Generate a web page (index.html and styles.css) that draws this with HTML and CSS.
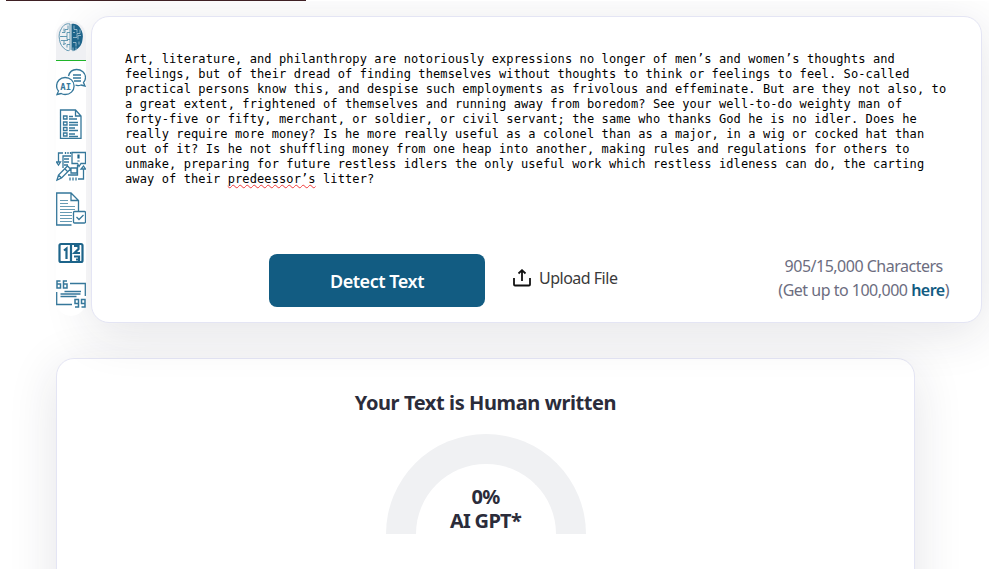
FILE: index.html
```html
<!DOCTYPE html>
<html lang="en">
<head>
    <meta charset="UTF-8">
    <meta name="viewport" content="width=device-width, initial-scale=1.0">
    <title>AI Text Detector</title>
    <link rel="stylesheet" href="styles.css">
</head>
<body>
    <div class="top-strip"></div>
    <main class="page">
        <div class="detector">
            <nav class="tools">
                <a class="tool active" title="Detector">
                    <svg width="30" height="39" viewBox="0 0 30 39">
                        <path class="fill" d="M15.500 3C20 2 23 4.500 24.500 7.500c2 3 3 7 2 11-.5 5-3 8-6 10-2 1.500-4 1.500-5 .5z"/>
                        <path class="light" d="M18 4.500v4h3v3m3-3v4h-3v4h-4m8-2h-3v4m-5-7h2m-2 10h3v4m3-5v3m-6 3v4m3-1v-3"/>
                        <path class="thin" d="M14 3C10 2 7 4.500 5.500 7.500c-2 3-3 7-2 11 .5 5 3 8 6 10 2 1.500 4 1.500 4.500 0zM12 4.500v4H9v3H6m8 0h-3v4H5m9 3h-3v-3M5 19.500h3v4m6 0h-3v3M8 7.500v3m-4 5h3m1 4h4m-5 4 3-1"/>
                    </svg>
                </a>
                <a class="tool" title="AI chat">
                    <svg width="30" height="42" viewBox="0 0 30 42">
                        <path class="line" d="M12.500 15c1-4 4-6.500 8-6.500 5 0 9 3.500 9 8 0 2-.7 3.500-2 5l1.500 3.500-4-1c-2 .7-4 .7-5.500 0M17 14h8m-8 3h8m-7 3h7"/>
                        <path class="line" d="M1 33.500 2.500 30C1 28.500.6 27 .6 25c0-4.500 3.500-8.500 8.500-8.500s9 3.500 9 8.500-4 8.500-9 8.500c-1.500 0-3-.4-4-1z"/>
                        <text class="ai-label" x="4.300" y="28.500">AI</text>
                    </svg>
                </a>
                <a class="tool" title="Checklist">
                    <svg width="30" height="42" viewBox="0 0 30 42">
                        <path class="line" d="M4.500 7h15l5.500 6v22.300H4.500zM19.500 7v6H25"/>
                        <path class="line" d="M7.500 13h3.500v3H7.500zm0 6h3.500v3H7.500zm0 5.500h3.500v3H7.500zm0 5.500h3.500v3H7.500zM13 13.500h4m-4 2.500h8m-8 3.500h9m-9 2.500h9m-9 3h6m-6 2.500h9m-9 3.500h6m-6 2.500h9"/>
                    </svg>
                </a>
                <a class="tool" title="Writing planner">
                    <svg width="30" height="42" viewBox="0 0 30 42">
                        <path class="line" d="M2.500 17V8H7m2.500-1v2m2.500-2v2m2.500-2v2M.5 17h4l-2 3zM7 23V11h8m-7 3h5m-5 3h5m-5 3h4M16 7.500h13.500v11H25l-2 3-1.500-3H16z"/>
                        <path class="line thick" d="M22.500 9.500v4m0 2v1"/>
                        <path class="line" d="M15 23h6v5h-6zM12 30h9.500V20M27.500 24v10H22m-2-1.500v3M17 32.500v3m-3-3v3M25 24h4.500l-2-3zM1 35l1.500-5 9-9 3 3-9 9zM2.500 30l3 3M9 24l3 3"/>
                    </svg>
                </a>
                <a class="tool" title="Document check">
                    <svg width="30" height="42" viewBox="0 0 30 42">
                        <path class="line" d="M15.500 38H.700V6H15L22.500 13.500v11M15 6v7.500h7.500"/>
                        <path class="thin" d="M4 13.500h8M4 16.500h8M4 19.500h15M4 22.500h15M4 25.500h12M4 28.500h12M4 31.500h12M4 34.500h12"/>
                        <rect class="line" x="17.500" y="24.500" width="12" height="11.500" rx="1"/>
                        <path class="line" d="m20.500 30 2.500 2.500 4.500-4.500"/>
                    </svg>
                </a>
                <a class="tool" title="Word counter">
                    <svg width="30" height="42" viewBox="0 0 30 42">
                        <rect class="line thick" x="3.500" y="15" width="23" height="18" rx="1.500"/>
                        <path class="line thick" d="M15 15v18M8 21.500l2.500-2v10.500"/>
                        <path class="line thick" d="M18 17h4.500v3L18.500 24H24M18 27.500h5V33M20 30.500h3"/>
                    </svg>
                </a>
                <a class="tool" title="Citations">
                    <svg width="30" height="42" viewBox="0 0 30 42">
                        <path class="line quote" d="M4.500 10H1v7h3.500v-4H1M11 10H7.500v7H11v-4H7.500"/>
                        <path class="line quote" d="M19 36h3.500v-7.500H19v4h3.500M25.500 36H29v-7.500h-3.500v4H29"/>
                        <path class="line" d="M14 12.500h15.300V25M.7 21v12.500H16M8.500 20.500H25M4.500 23h20M4.500 25.500h16"/>
                    </svg>
                </a>
            </nav>
            <section class="card editor">
                <div class="editor-text">
                    <div>Art, literature, and philanthropy are notoriously expressions no longer of men’s and women’s thoughts and</div>
                    <div>feelings, but of their dread of finding themselves without thoughts to think or feelings to feel. So-called</div>
                    <div>practical persons know this, and despise such employments as frivolous and effeminate. But are they not also, to</div>
                    <div>a great extent, frightened of themselves and running away from boredom? See your well-to-do weighty man of</div>
                    <div>forty-five or fifty, merchant, or soldier, or civil servant; the same who thanks God he is no idler. Does he</div>
                    <div>really require more money? Is he more really useful as a colonel than as a major, in a wig or cocked hat than</div>
                    <div>out of it? Is he not shuffling money from one heap into another, making rules and regulations for others to</div>
                    <div>unmake, preparing for future restless idlers the only useful work which restless idleness can do, the carting</div>
                    <div>away of their <span class="misspelled">predeessor’s</span> litter?</div>
                </div>
                <div class="actions">
                    <button class="btn" type="button">Detect Text</button>
                    <a class="upload">
                        <svg width="18" height="18" viewBox="0 0 18 18">
                            <path d="M1 9v6.500q0 1 1 1h14q1 0 1-1V9M9 12V1.500M5.500 4.500 9 1.200 12.500 4.500"/>
                        </svg>
                        <span>Upload File</span>
                    </a>
                    <div class="counter">
                        <div class="count">905/15,000 Characters</div>
                        <div class="more">(Get up to 100,000 <a class="link">here</a>)</div>
                    </div>
                </div>
            </section>
        </div>
        <section class="card result">
            <h2>Your Text is Human written</h2>
            <div class="gauge">
                <div class="percent">0%</div>
                <div class="model">AI GPT*</div>
            </div>
        </section>
    </main>
</body>
</html>
```
FILE: styles.css
```css
* {
    box-sizing: border-box;
}

body {
    margin: 0;
    background-color: #fff;
    font-family: "Noto Sans", "Open Sans", sans-serif;
    color: #2b2c3a;
}

.top-strip {
    width: 300px;
    height: 1px;
    margin-left: 6px;
    background-color: #3f2024;
}

.page {
    height: 568px;
    padding: 15px 7px 0 56px;
    overflow: hidden;
}

.detector {
    display: flex;
    align-items: flex-start;
    gap: 5px;
}

.tools {
    display: flex;
    flex-direction: column;
    width: 30px;
    margin-top: 5px;
    padding-bottom: 3px;
    background-color: #fff;
    border-radius: 15px;
    position: relative;
    z-index: 1;
}

.tool {
    display: block;
    height: 42px;
}

.tool.active {
    height: 40px;
    background-color: #eff0f3;
    border-bottom: 1px solid #20b52a;
    border-radius: 15px 15px 0 0;
}

.tool svg {
    display: block;
    fill: none;
    stroke: #35779a;
}

.tool .fill {
    fill: #1d648a;
    stroke: none;
}

.tool .light {
    stroke: #a9c7d5;
    stroke-width: 0.8;
}

.tool .thin {
    stroke: #5590ab;
    stroke-width: 0.9;
}

.tool .line {
    stroke-width: 1.3;
}

.tool .thick {
    stroke: #1d648a;
    stroke-width: 2.2;
}

.tool .quote {
    stroke-width: 1.5;
}

.ai-label {
    font: bold 9px "DejaVu Sans Mono", monospace;
    fill: #35779a;
    stroke: none;
}

.card {
    background-color: #fff;
    border: 1px solid #e4e5f4;
    border-radius: 18px;
    box-shadow: 0 10px 50px rgba(30, 34, 60, 0.12);
}

.editor {
    width: 891px;
    height: 307px;
    padding: 35px 32px 0 33px;
}

.editor-text {
    height: 202px;
    font-family: "DejaVu Sans Mono", monospace;
    font-size: 12px;
    line-height: 15px;
    letter-spacing: 0.108px;
    color: #000;
    white-space: nowrap;
}

.misspelled {
    text-decoration: underline wavy #f03a3a 1.3px;
    text-decoration-skip-ink: none;
    text-underline-offset: 1px;
}

.actions {
    display: flex;
    align-items: flex-start;
    padding-left: 144px;
}

.btn {
    width: 216px;
    height: 53px;
    padding: 1px 0 0;
    border: none;
    border-radius: 8px;
    background-color: #125c82;
    color: #fff;
    font-family: inherit;
    font-size: 18px;
    font-weight: 600;
    letter-spacing: -0.45px;
}

.upload {
    display: flex;
    align-items: center;
    gap: 8px;
    height: 24px;
    margin: 12px 0 0 28px;
    font-size: 16px;
    letter-spacing: -0.5px;
    color: #3a3a3a;
}

.upload svg {
    fill: none;
    stroke: #111;
    stroke-width: 1.8;
}

.counter {
    margin-left: auto;
    font-size: 16px;
    line-height: 24px;
    letter-spacing: -0.5px;
    text-align: center;
    color: #6c6d80;
}

.link {
    color: #125c82;
    font-weight: 600;
}

/* runs on below the fold */
.result {
    width: 859px;
    height: 330px;
    margin-top: 35px;
    padding-top: 29px;
}

.result h2 {
    margin: 0;
    font-size: 20px;
    font-weight: 700;
    line-height: 30px;
    letter-spacing: -0.4px;
    text-align: center;
}

.gauge {
    width: 200px;
    height: 100px;
    margin: 16px auto 0;
    padding-top: 21px;
    border: 30px solid #f0f1f3;
    border-bottom: none;
    border-radius: 100px 100px 0 0;
    font-size: 20px;
    font-weight: 700;
    line-height: 24px;
    letter-spacing: -0.7px;
    text-align: center;
    white-space: nowrap;
}
```
